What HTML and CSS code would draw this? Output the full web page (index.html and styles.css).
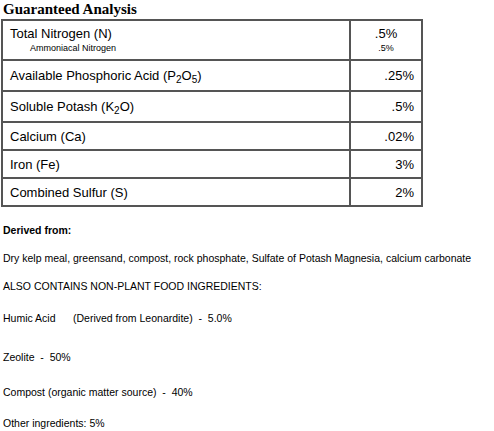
FILE: index.html
```html
<!DOCTYPE html>
<html lang="en">
<head>
    <meta charset="UTF-8">
    <title>Guaranteed Analysis</title>
    <link rel="stylesheet" href="styles.css">
</head>
<body>
    <h3 class="title">Guaranteed Analysis</h3>
    <table class="analysis">
        <tr class="row-tall">
            <td class="name">Total Nitrogen (N)<div class="sub-name">Ammoniacal Nitrogen</div></td>
            <td class="value center">.5%<div class="sub-value">.5%</div></td>
        </tr>
        <tr class="row-mid">
            <td class="name">Available Phosphoric Acid (P<sub>2</sub>O<sub>5</sub>)</td>
            <td class="value">.25%</td>
        </tr>
        <tr class="row-mid">
            <td class="name">Soluble Potash (K<sub>2</sub>O)</td>
            <td class="value">.5%</td>
        </tr>
        <tr>
            <td class="name">Calcium (Ca)</td>
            <td class="value">.02%</td>
        </tr>
        <tr>
            <td class="name">Iron (Fe)</td>
            <td class="value">3%</td>
        </tr>
        <tr>
            <td class="name">Combined Sulfur (S)</td>
            <td class="value">2%</td>
        </tr>
    </table>

    <div class="notes">
        <p class="derived"><b>Derived from:</b></p>
        <p class="line">Dry kelp meal, greensand, compost, rock phosphate, Sulfate of Potash Magnesia, calcium carbonate</p>
        <p class="line">ALSO CONTAINS NON-PLANT FOOD INGREDIENTS:</p>
        <p class="line humic">Humic Acid &nbsp;&nbsp;&nbsp;&nbsp;&nbsp;(Derived from Leonardite) &nbsp;- &nbsp;5.0%</p>
        <p class="line zeolite">Zeolite &nbsp;- &nbsp;50%</p>
        <p class="line compost">Compost (organic matter source) &nbsp;- &nbsp;40%</p>
        <p class="line other">Other ingredients: 5%</p>
    </div>
</body>
</html>
```

FILE: styles.css
```css
body, html {
    margin: 0;
    background: #fff;
    color: #000;
}

body {
    padding: 0 0 0 1px;
}

.title {
    font-family: "Liberation Serif", serif;
    font-size: 15px;
    font-weight: bold;
    margin: 0 0 0 2px;
    line-height: 19px;
}

.analysis {
    width: 422px;
    border-collapse: collapse;
    border: 2px solid #555;
    font-family: "Liberation Sans", Arial, sans-serif;
    font-size: 13px;
}

.analysis td {
    border: 2px solid #555;
    height: 26px;
    padding: 0 7px;
    vertical-align: middle;
}

.analysis .row-tall td {
    height: 38px;
}

.analysis .row-mid td {
    height: 29px;
}

.analysis .value {
    width: 56px;
    text-align: right;
}

.analysis .center {
    text-align: center;
}

.sub-name {
    font-size: 9px;
    padding-left: 20px;
    margin-top: 2px;
    line-height: 11px;
}

.sub-value {
    font-size: 9px;
    margin-top: 2px;
    line-height: 11px;
}

sub {
    font-size: 10px;
    vertical-align: -3px;
    line-height: 0;
}

.notes {
    font-family: "Liberation Sans", Arial, sans-serif;
    font-size: 10.5px;
    padding-left: 2px;
}

.notes p {
    margin: 0;
    line-height: 12px;
}

.derived {
    margin-top: 17px !important;
}

.line {
    margin-top: 16px !important;
}

.humic {
    margin-top: 20px !important;
}

.zeolite {
    margin-top: 27px !important;
}

.compost {
    margin-top: 23px !important;
}

.other {
    margin-top: 19px !important;
}
```
